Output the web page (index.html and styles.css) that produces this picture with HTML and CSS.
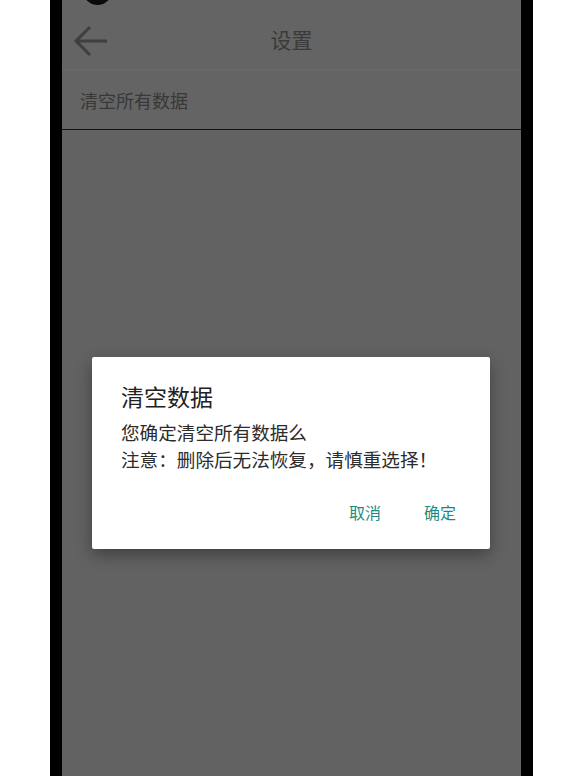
FILE: index.html
```html
<!DOCTYPE html>
<html>

<head>
    <meta charset="UTF-8">
    <title>设置</title>
    <link rel="stylesheet" href="styles.css">
</head>

<body>
    <div class="phone">
        <div class="camera"></div>
        <div class="screen">
            <div class="toolbar">
                <svg class="back" width="36" height="32" viewBox="0 0 36 32">
                    <path d="M34 16H3M17 2L3 16l14 14" fill="none" stroke="#3f3f3f" stroke-width="3" />
                </svg>
                <div class="title">设置</div>
            </div>
            <div class="item">清空所有数据</div>

            <!-- 确认对话框 -->
            <div class="dialog">
                <div class="dialog-title">清空数据</div>
                <div class="dialog-msg">
                    <p>您确定清空所有数据么</p>
                    <p>注意：删除后无法恢复，请慎重选择！</p>
                </div>
                <div class="dialog-actions">
                    <span class="btn">取消</span>
                    <span class="btn">确定</span>
                </div>
            </div>
        </div>
    </div>
</body>

</html>
```

FILE: styles.css
```css
body {
    margin: 0;
    background-color: #ffffff;
    font-family: "Noto Sans CJK SC", "Noto Sans", sans-serif;
}

.phone {
    position: relative;
    width: 459px;
    height: 776px;
    margin-left: 50px;
    padding: 0 12px;
    background-color: #000;
}

.camera {
    position: absolute;
    left: 33px;
    top: -24px;
    width: 29px;
    height: 29px;
    border-radius: 50%;
    background-color: #0a0a0a;
    z-index: 2;
}

.screen {
    position: relative;
    display: flex;
    flex-direction: column;
    height: 100%;
    background-color: #626262;
}

.toolbar {
    position: relative;
    display: flex;
    align-items: center;
    justify-content: center;
    height: 69px;
    border-bottom: 1px solid #6a6a6a;
    background-color: #646464;
}

.back {
    position: absolute;
    left: 11px;
    top: 25px;
}

.title {
    font-size: 21px;
    color: #3a3a3a;
    margin-top: 8px;
}

.item {
    display: flex;
    align-items: center;
    height: 59px;
    padding-left: 18px;
    font-size: 18px;
    color: #383838;
    border-bottom: 1px solid #111;
    background-color: #646464;
}

.dialog {
    position: absolute;
    left: 30px;
    top: 357px;
    width: 398px;
    height: 168px;
    padding-top: 24px;
    box-sizing: content-box;
    background-color: #fff;
    box-shadow: 0 6px 16px rgba(0, 0, 0, 0.35);
    border-radius: 2px;
    color: #262626;
}

.dialog-title {
    padding: 0 29px;
    font-size: 23px;
    line-height: 30px;
    color: #222;
}

.dialog-msg {
    padding: 0 29px;
    margin-top: 7px;
}

.dialog-msg p {
    margin: 0;
    font-size: 18.6px;
    line-height: 27px;
    color: #2c2c2c;
}

.dialog-actions {
    display: flex;
    justify-content: flex-end;
    gap: 43px;
    padding-right: 34px;
    margin-top: 29px;
}

.btn {
    font-size: 16px;
    line-height: 22px;
    color: #1f8b80;
}
```
